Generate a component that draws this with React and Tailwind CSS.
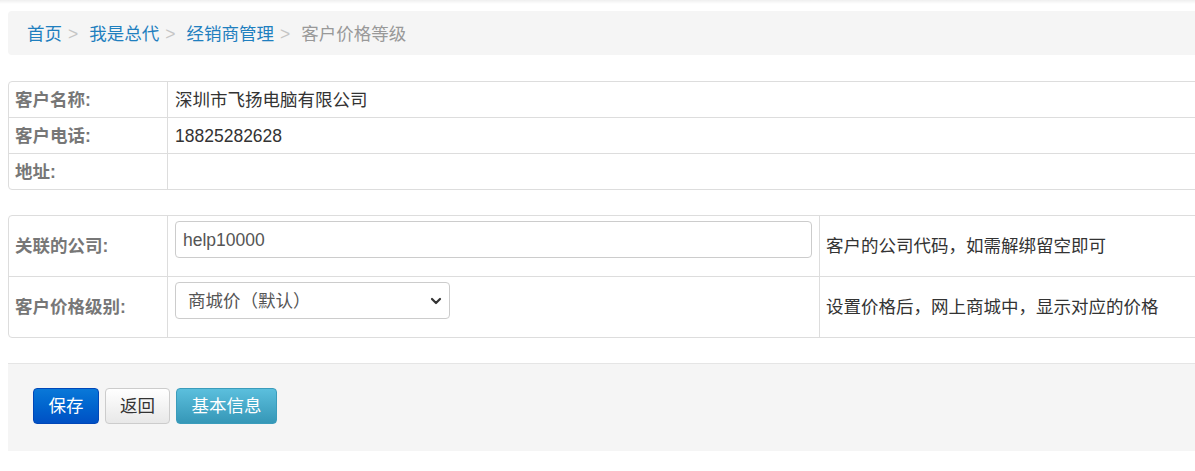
import React from "react";

const font = { fontFamily: '"Liberation Sans", "Noto Sans CJK SC", sans-serif' };

function Chevron() {
  return (
    <svg width="12" height="12" viewBox="0 0 12 12" className="text-[#333]">
      <path d="M2 4 L6 8 L10 4" fill="none" stroke="currentColor" strokeWidth="2.2" strokeLinecap="round" strokeLinejoin="round" />
    </svg>
  );
}

export default function App() {
  return (
    <div className="w-full overflow-hidden bg-white text-[17.5px] leading-[24px]" style={font}>
      <div className="h-[4px] bg-gradient-to-b from-[#efefef] to-white" />
      <div className="w-[1260px] pl-2 pt-[7px] pb-[21px]">
        {/* breadcrumb */}
        <div className="h-[44px] rounded-[4px] bg-[#f5f5f5] flex items-center pl-[19px] pt-[1px] text-[#1f7fbf]">
          <span>首页</span>
          <span className="text-[#c5c5c5] pl-[6px] pr-[11px]">&gt;</span>
          <span>我是总代</span>
          <span className="text-[#c5c5c5] pl-[6px] pr-[11px]">&gt;</span>
          <span>经销商管理</span>
          <span className="text-[#c5c5c5] pl-[6px] pr-[11px]">&gt;</span>
          <span className="text-[#999]">客户价格等级</span>
        </div>

        {/* info table */}
        <div className="mt-[26px] border border-[#ddd] rounded-[4px]">
          {[
            ["客户名称:", "深圳市飞扬电脑有限公司"],
            ["客户电话:", "18825282628"],
            ["地址:", ""],
          ].map(([k, v], i) => (
            <div key={k} className={`flex ${i > 0 ? "h-[36px] border-t border-[#ddd]" : "h-[35px]"}`}>
              <div className="w-[158px] shrink-0 pl-[6px] flex items-center font-bold text-[#777]">{k}</div>
              <div className="flex-1 border-l border-[#ddd] pl-[7px] flex items-center text-[#333]">{v}</div>
            </div>
          ))}
        </div>

        {/* form table */}
        <div className="mt-[25px] border border-[#ddd] rounded-[4px]">
          <div className="flex h-[60px]">
            <div className="w-[158px] shrink-0 pl-[6px] flex items-center font-bold text-[#777]">关联的公司:</div>
            <div className="w-[652px] shrink-0 border-l border-[#ddd] pl-[7px] pt-[5px]">
              <div className="w-[637px] h-[37px] border border-[#ccc] rounded-[4px] flex items-center pl-[7px] text-[#555]">help10000</div>
            </div>
            <div className="flex-1 border-l border-[#ddd] pl-[6px] flex items-center text-[#333]">客户的公司代码，如需解绑留空即可</div>
          </div>
          <div className="flex h-[61px] border-t border-[#ddd]">
            <div className="w-[158px] shrink-0 pl-[6px] flex items-center font-bold text-[#777]">客户价格级别:</div>
            <div className="w-[652px] shrink-0 border-l border-[#ddd] pl-[7px] pt-[5px]">
              <div className="w-[275px] h-[37px] border border-[#ccc] rounded-[4px] flex items-center justify-between pl-[12px] pr-[7px] text-[#555]">
                <span>商城价（默认）</span>
                <Chevron />
              </div>
            </div>
            <div className="flex-1 border-l border-[#ddd] pl-[6px] flex items-center text-[#333]">设置价格后，网上商城中，显示对应的价格</div>
          </div>
        </div>

        {/* actions */}
        <div className="mt-[25px] h-[88px] bg-[#f5f5f5] border-t border-[#e5e5e5] flex items-start pt-[24px] pl-[25px] gap-[6px]">
          <div className="h-[36px] w-[66px] rounded-[4px] border border-[#0047b8] bg-gradient-to-b from-[#0a78d8] to-[#0050c4] text-white flex items-center justify-center">保存</div>
          <div className="h-[36px] w-[65px] rounded-[4px] border border-[#ccc] bg-gradient-to-b from-white to-[#e8e8e8] text-[#333] flex items-center justify-center">返回</div>
          <div className="h-[36px] w-[101px] rounded-[4px] border border-[#3a9cbb] bg-gradient-to-b from-[#5bbfdd] to-[#3597b7] text-white flex items-center justify-center">基本信息</div>
        </div>
      </div>
    </div>
  );
}
